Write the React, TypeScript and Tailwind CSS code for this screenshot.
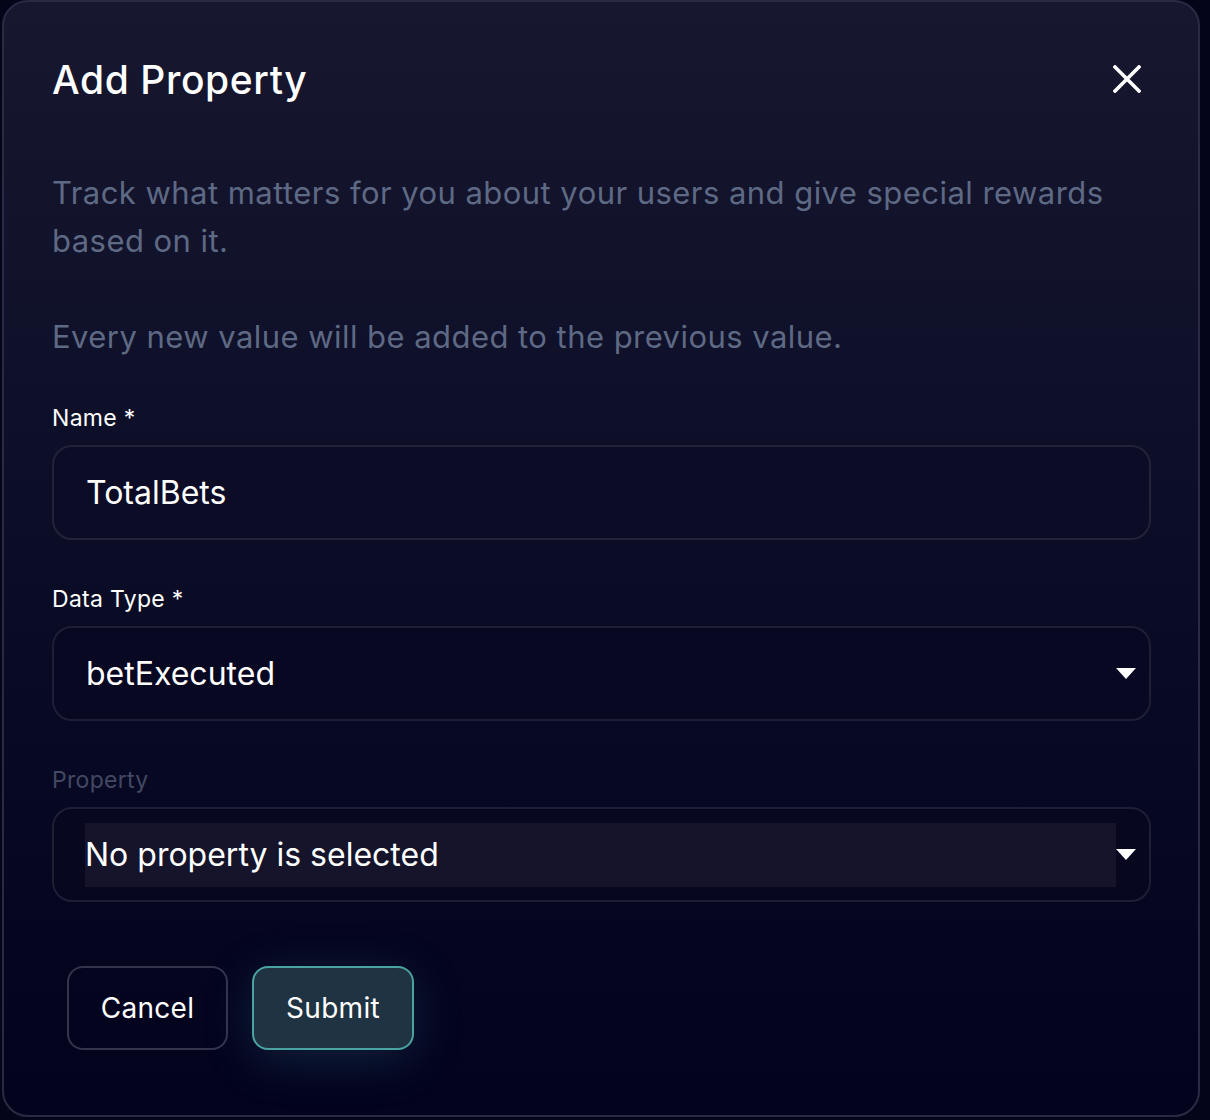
import React from "react";

function Caret() {
  return (
    <svg width="20" height="11" viewBox="0 0 20 11" className="shrink-0">
      <polygon points="0,0 20,0 10,11" fill="#ffffff" />
    </svg>
  );
}

export default function App() {
  return (
    <div
      className="w-[1210px] h-[1120px] bg-[#05051a] overflow-hidden"
      style={{ fontFamily: "Inter, 'Noto Sans', sans-serif" }}
    >
      <div className="ml-[2px] w-[1198px] h-[1117px] rounded-[26px] border-2 border-[#2a2a45] bg-gradient-to-b from-[#17172f] to-[#03031d] flex flex-col px-[48px]">
        <div className="flex items-center justify-between pt-[52px] h-[104px]">
          <h1 className="text-[39px] leading-[48px] font-medium text-white tracking-[0.6px]">Add Property</h1>
          <svg width="28" height="28" viewBox="0 0 28 28" className="mr-[9px] mt-[-2px]">
            <path d="M2 2 L26 26 M26 2 L2 26" stroke="#ffffff" strokeWidth="3.6" strokeLinecap="square" />
          </svg>
        </div>
        <div className="mt-[63px] text-[31px] leading-[48px] text-[#5e6984] tracking-[0.45px]">
          <p>Track what matters for you about your users and give special rewards based on it.</p>
          <p className="mt-[48px]">Every new value will be added to the previous value.</p>
        </div>

        <div className="mt-[43px] flex flex-col">
          <label className="text-[23px] leading-[28px] text-white tracking-[0.3px]">Name *</label>
          <div className="mt-[13px] w-[1099px] h-[95px] rounded-[20px] border-2 border-[#22223a] bg-[#0c0c26] flex items-center pl-[32px]">
            <span className="text-[32px] text-white">TotalBets</span>
          </div>
        </div>

        <div className="mt-[45px] flex flex-col">
          <label className="text-[23px] leading-[28px] text-white tracking-[0.3px]">Data Type *</label>
          <div className="mt-[13px] w-[1099px] h-[95px] rounded-[20px] border-2 border-[#1e1e36] bg-[#080822] flex items-center justify-between pl-[32px] pr-[13px]">
            <span className="text-[32px] text-white">betExecuted</span>
            <Caret />
          </div>
        </div>

        <div className="mt-[45px] flex flex-col">
          <label className="text-[23px] leading-[28px] text-[#434862] tracking-[0.3px]">Property</label>
          <div className="mt-[13px] w-[1099px] h-[95px] rounded-[20px] border-2 border-[#1e1e36] bg-[#070720] flex items-center pl-[31px] pr-[13px]">
            <div className="w-[1032px] h-[64px] bg-[#15142b] flex items-center">
              <span className="text-[32px] text-white">No property is selected</span>
            </div>
            <div className="ml-auto">
              <Caret />
            </div>
          </div>
        </div>

        <div className="mt-[64px] ml-[15px] flex gap-[24px]">
          <button className="w-[161px] h-[84px] rounded-[16px] border-2 border-[#34344d] bg-transparent text-white text-[28px] tracking-[0.3px]">
            Cancel
          </button>
          <button className="w-[162px] h-[84px] rounded-[16px] border-2 border-[#4ba39f] bg-[#1f3343] text-white text-[28px] tracking-[0.3px] shadow-[0_10px_50px_rgba(64,140,160,0.22)]">
            Submit
          </button>
        </div>
      </div>
    </div>
  );
}
